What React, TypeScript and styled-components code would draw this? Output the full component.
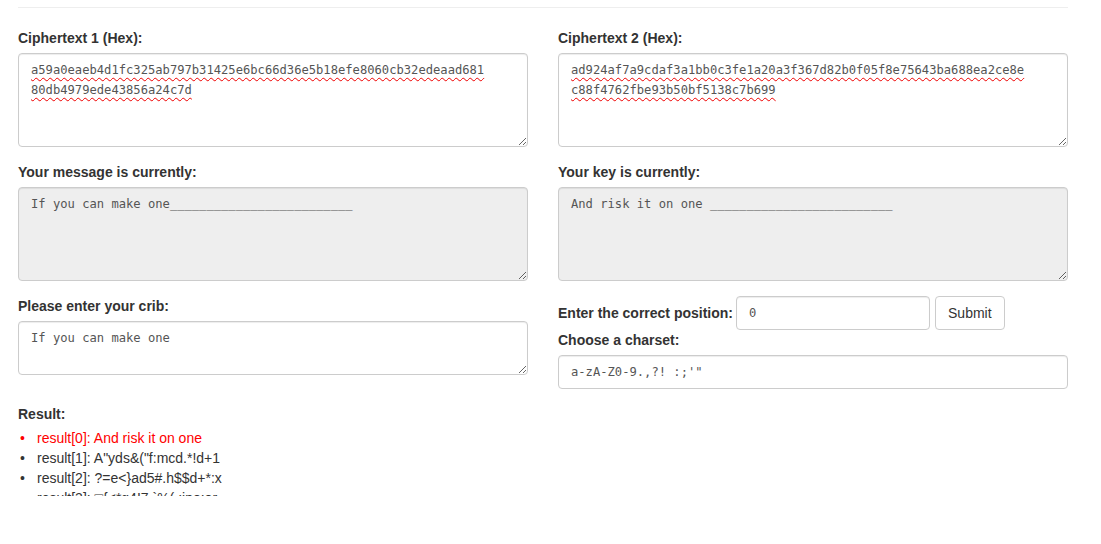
import React from "react";
import styled, { createGlobalStyle, css } from "styled-components";

const GlobalStyle = createGlobalStyle`
  html, body { margin: 0; padding: 0; background: #fff; }
  body {
    font-family: "Liberation Sans", Arial, Helvetica, sans-serif;
    font-size: 14px;
    line-height: 20px;
    color: #333;
  }
  * { box-sizing: border-box; }
`;

const Page = styled.div`
  width: 1050px;
  margin-left: 18px;
`;

const Rule = styled.hr`
  margin: 7px 0 20px;
  border: 0;
  border-top: 1px solid #eee;
`;

const Grid = styled.div`
  display: grid;
  grid-template-columns: 510px 510px;
  column-gap: 30px;
  align-items: start;
`;

const Column = styled.div`
  display: flex;
  flex-direction: column;
`;

const Group = styled.div`
  display: flex;
  flex-direction: column;
  margin-bottom: 15px;
`;

const Label = styled.label<{ $gap?: number }>`
  display: block;
  font-weight: bold;
  margin-bottom: ${(p) => (p.$gap ?? 5)}px;
`;

const fieldBase = css`
  display: block;
  width: 100%;
  border: 1px solid #ccc;
  border-radius: 4px;
  box-shadow: inset 0 1px 1px rgba(0, 0, 0, 0.075);
  padding: 6px 12px;
  font-family: "DejaVu Sans Mono", Consolas, monospace;
  font-size: 12.15px;
  line-height: 20px;
  color: #555;
  outline: none;
`;

const TextArea = styled.textarea<{ $h: number; $ro?: boolean }>`
  ${fieldBase};
  height: ${(p) => p.$h}px;
  resize: vertical;
  background: ${(p) => (p.$ro ? "#eee" : "#fff")};
  margin: 0;
`;

const HexBox = styled.div<{ $h: number }>`
  ${fieldBase};
  height: ${(p) => p.$h}px;
  resize: vertical;
  overflow: auto;
  background: #fff;
  white-space: pre;
`;

const HexLine = styled.span`
  display: block;
  width: fit-content;
  text-decoration: underline wavy #e00;
  text-decoration-thickness: 1px;
  text-underline-offset: 3px;
  text-decoration-skip-ink: none;
`;

const Input = styled.input<{ $w?: number }>`
  ${fieldBase};
  height: 34px;
  width: ${(p) => (p.$w ? `${p.$w}px` : "100%")};
  background: #fff;
  margin: 0;
`;

const InlineRow = styled.div`
  display: flex;
  align-items: center;
  gap: 3px;
`;

const InlineLabel = styled.label`
  font-weight: bold;
`;

const Button = styled.button`
  height: 34px;
  padding: 6px 12px;
  margin-left: 2px;
  font-family: "Liberation Sans", Arial, sans-serif;
  font-size: 14px;
  line-height: 20px;
  color: #333;
  background: #fff;
  border: 1px solid #ccc;
  border-radius: 4px;
`;

const ResultList = styled.ul`
  margin: 0;
  padding: 0;
  list-style: none;
  max-height: 68px;
  overflow: hidden;
`;

const ResultItem = styled.li<{ $hit?: boolean }>`
  color: ${(p) => (p.$hit ? "#f00" : "#333")};
  line-height: 20px;
  &::before {
    content: "\\2022";
    display: inline-block;
    width: 17px;
    padding-left: 2px;
  }
`;

const pad = "_".repeat(25);

const results = [
  "result[0]: And risk it on one",
  "result[1]: A\"yds&(\"f:mcd.*!d+1",
  "result[2]: ?=e<}ad5#.h$$d+*:x",
  "result[3]: \u25A1{<*g4!7 `%( ;ipo:or",
];

export default function App() {
  return (
    <>
      <GlobalStyle />
      <Page>
        <Rule />
        <Grid>
          <Column>
            <Group>
              <Label>Ciphertext 1 (Hex):</Label>
              <HexBox $h={94}>
                <HexLine>a59a0eaeb4d1fc325ab797b31425e6bc66d36e5b18efe8060cb32edeaad681</HexLine>
                <HexLine>80db4979ede43856a24c7d</HexLine>
              </HexBox>
            </Group>
            <Group>
              <Label>Your message is currently:</Label>
              <TextArea $h={94} $ro readOnly value={"If you can make one" + pad} />
            </Group>
            <Group>
              <Label>Please enter your crib:</Label>
              <TextArea $h={54} readOnly value="If you can make one" />
            </Group>
          </Column>
          <Column>
            <Group>
              <Label>Ciphertext 2 (Hex):</Label>
              <HexBox $h={94}>
                <HexLine>ad924af7a9cdaf3a1bb0c3fe1a20a3f367d82b0f05f8e75643ba688ea2ce8e</HexLine>
                <HexLine>c88f4762fbe93b50bf5138c7b699</HexLine>
              </HexBox>
            </Group>
            <Group>
              <Label>Your key is currently:</Label>
              <TextArea $h={94} $ro readOnly value={"And risk it on one " + pad} />
            </Group>
            <InlineRow>
              <InlineLabel>Enter the correct position:</InlineLabel>
              <Input $w={194} readOnly value="0" />
              <Button>Submit</Button>
            </InlineRow>
            <Group>
              <Label>Choose a charset:</Label>
              <Input readOnly value={"a-zA-Z0-9.,?! :;'\""} />
            </Group>
          </Column>
        </Grid>
        <Label $gap={4}>Result:</Label>
        <ResultList>
          {results.map((r, i) => (
            <ResultItem key={i} $hit={i === 0}>
              {r}
            </ResultItem>
          ))}
        </ResultList>
      </Page>
    </>
  );
}
